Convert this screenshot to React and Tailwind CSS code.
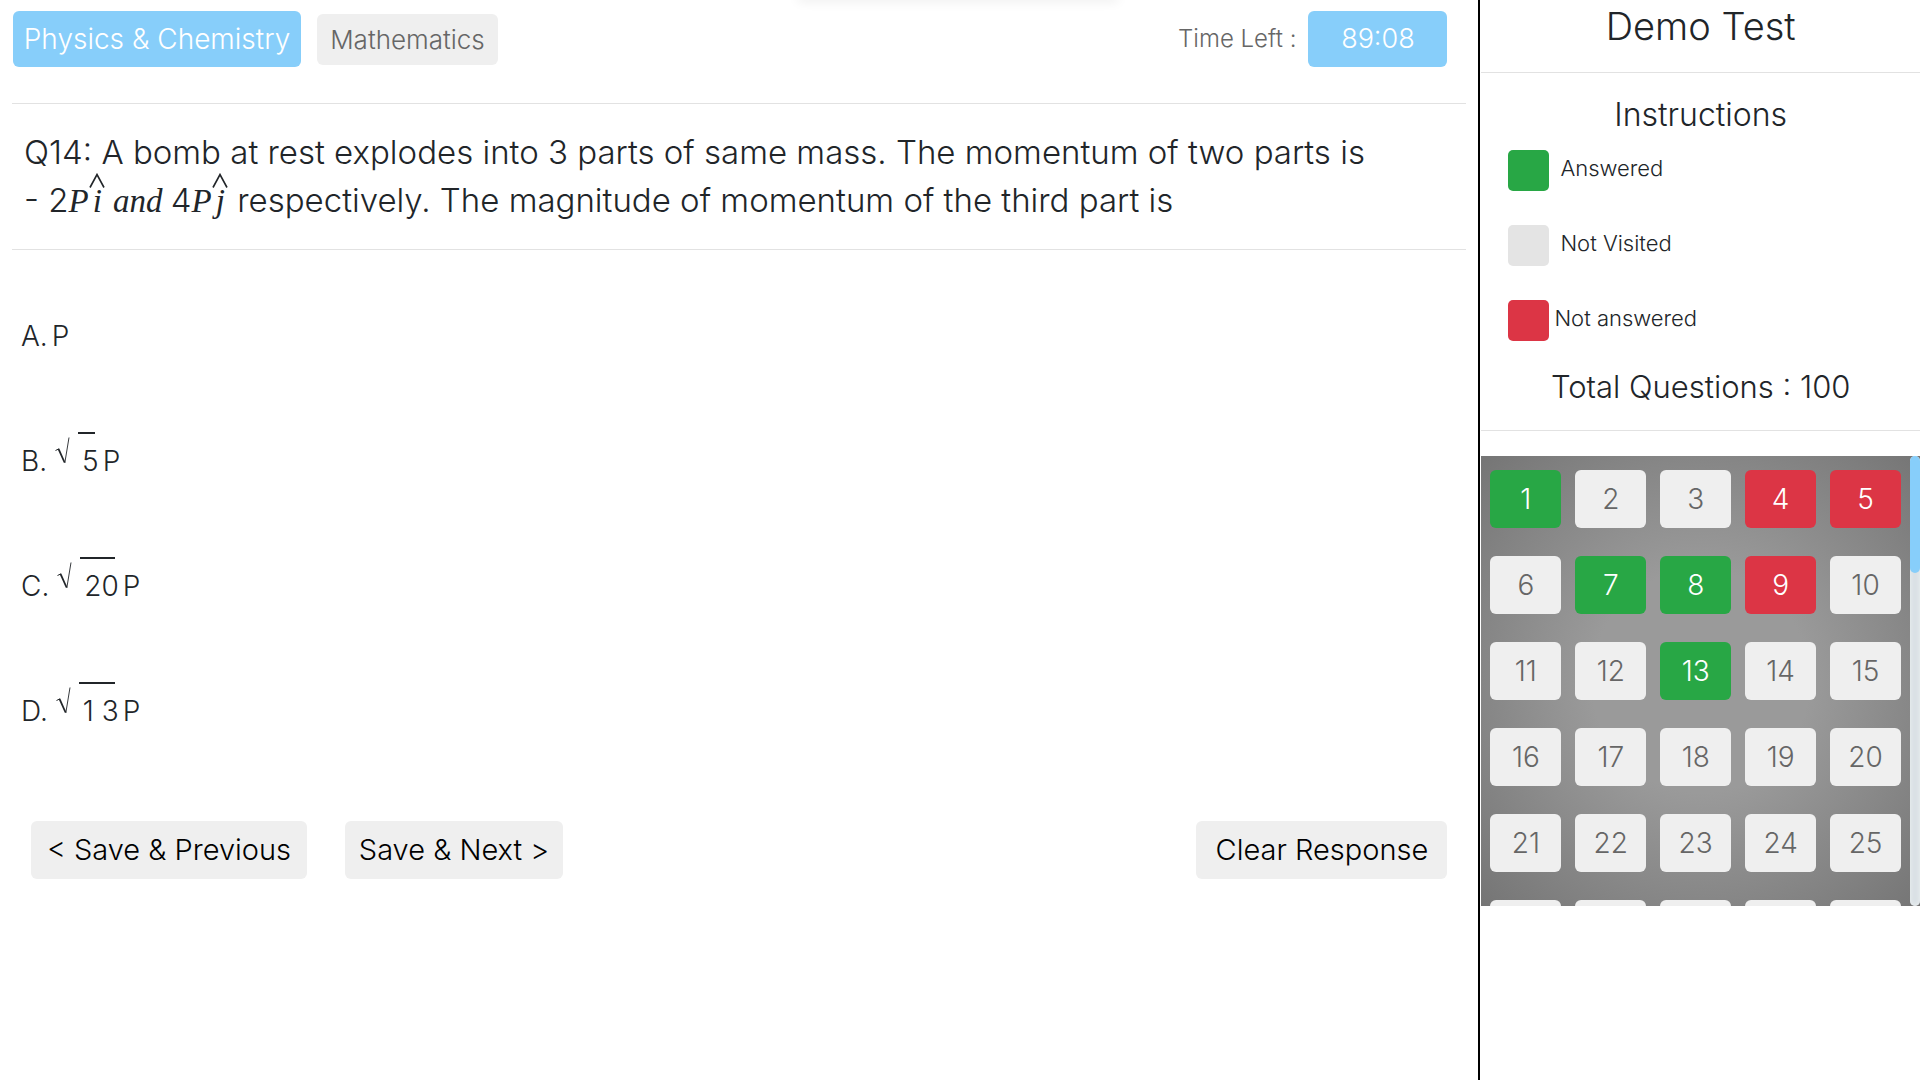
import React from "react";

const ANSWERED = [1, 7, 8, 13];
const NOT_ANSWERED = [4, 5, 9];
const QUESTIONS = Array.from({ length: 30 }, (_, i) => i + 1);

const OPTIONS = [
  { letter: "A", root: null },
  { letter: "B", root: "5" },
  { letter: "C", root: "20" },
  { letter: "D", root: "1 3" },
];

function tileColor(n) {
  if (ANSWERED.includes(n)) return "bg-[#28a745] text-white";
  if (NOT_ANSWERED.includes(n)) return "bg-[#dc3545] text-white";
  return "bg-[#efefef] text-[#666]";
}

function Hat({ children }) {
  return (
    <span className="relative ml-1 mr-[3px] inline-block">
      {children}
      <svg
        className="absolute left-1/2 -top-1 -translate-x-1/2"
        width="16"
        height="15"
        viewBox="0 0 16 15"
        fill="none"
        stroke="#212529"
        strokeWidth="1.6"
        aria-hidden="true"
      >
        <path d="M1 14.5 8 1.5l7 13" />
      </svg>
    </span>
  );
}

function Root({ children }) {
  return (
    <>
      <svg className="mb-5 ml-2" width="15" height="27" viewBox="0 0 15 27" fill="none" stroke="#212529" aria-hidden="true">
        <path d="M0.5 13.5 4 11.8" strokeWidth="1" />
        <path d="M3.5 11.8 9.6 25.5" strokeWidth="1.8" />
        <path d="M9.8 26 14 0.5" strokeWidth="0.9" />
      </svg>
      <span className="relative ml-3">
        {children}
        <span className="absolute -left-1 right-1 -top-2 h-0.5 bg-[#212529]" />
      </span>
    </>
  );
}

function Legend({ color, gap, children }) {
  return (
    <li className={"flex h-[41px] " + gap}>
      <span className={"size-[41px] shrink-0 rounded-[5px] " + color} />
      <span className="text-[22px] leading-9">{children}</span>
    </li>
  );
}

export default function App() {
  return (
    <div className="flex min-h-screen bg-white font-[Inter,sans-serif] font-light text-[#212529]">
      <main className="relative min-w-0 flex-1 px-3">
        <div className="absolute left-[54%] -top-1 h-1 w-[320px] shadow-[0_0_12px_rgba(0,0,0,0.14)]" />
        <header className="flex h-[103px] items-start justify-between pl-px pr-[19px] pt-[11px]">
          <nav className="flex items-center gap-4">
            <button className="h-14 w-[288px] whitespace-nowrap rounded-md bg-[#87cefa] text-[28px] text-white">
              Physics &amp; Chemistry
            </button>
            <button className="h-[51px] w-[181px] whitespace-nowrap rounded-md bg-[#efefef] text-[26px] text-[#666]">
              Mathematics
            </button>
          </nav>
          <div className="flex items-center gap-3">
            <span className="text-[24px] text-[#666]">Time Left :</span>
            <span className="flex h-14 w-[139px] items-center justify-center rounded-md bg-[#87cefa] text-[27px] text-white">
              89:08
            </span>
          </div>
        </header>

        <section className="border-y border-[#e2e2e2] pb-6 pl-3 pt-6">
          <h1 className="text-[33px] leading-[48px]">
            Q14: A bomb at rest explodes into 3 parts of same mass. The momentum of two parts is
            <br />- 2
            <span className="font-['Liberation_Serif',serif] font-normal italic">
              P<Hat>i</Hat> and{" "}
            </span>
            4
            <span className="font-['Liberation_Serif',serif] font-normal italic">
              P<Hat>j</Hat>
            </span>{" "}
            respectively. The magnitude of momentum of the third part is
          </h1>
        </section>

        <fieldset className="mt-[23px]">
          {OPTIONS.map((o) => (
            <label key={o.letter} className="flex h-[125px] items-center pl-[9px] text-[28px]">
              <input type="radio" name="answer" value={o.letter} className="sr-only" />
              <span>{o.letter}.</span>
              {o.root && <Root>{o.root}</Root>}
              <span className="ml-1">P</span>
            </label>
          ))}
        </fieldset>

        <div className="mt-12 flex pl-[19px] pr-[19px] text-[29px] text-black">
          <button className="h-[58px] w-[276px] whitespace-nowrap rounded-md bg-[#efefef]">&lt; Save &amp; Previous</button>
          <button className="ml-[38px] h-[58px] w-[218px] whitespace-nowrap rounded-md bg-[#efefef]">
            Save &amp; Next &gt;
          </button>
          <button className="ml-auto h-[58px] w-[251px] whitespace-nowrap rounded-md bg-[#efefef]">Clear Response</button>
        </div>
      </main>

      <aside className="w-[23%] shrink-0 border-l-2 border-black pl-px">
        <h2 className="h-[73px] border-b border-[#e2e2e2] text-center text-[38px] leading-[52px]">Demo Test</h2>
        <div className="h-[358px] border-b border-[#e2e2e2] pt-[18px]">
          <h3 className="text-center text-[32px] leading-[48px]">Instructions</h3>
          <ul className="mt-[11px] flex flex-col gap-[34px] pl-[27px]">
            <Legend color="bg-[#28a745]" gap="gap-[11px]">Answered</Legend>
            <Legend color="bg-[#e4e4e4]" gap="gap-[11px]">Not Visited</Legend>
            <Legend color="bg-[#dc3545]" gap="gap-[5px]">Not answered</Legend>
          </ul>
          <p className="mt-[22px] text-center text-[31px] leading-[48px]">Total Questions : 100</p>
        </div>
        <div className="mt-[25px] flex h-[450px] bg-[radial-gradient(ellipse_at_center,#9a9a9a_35%,#757575_100%)]">
          <div className="grid flex-1 auto-rows-[58px] grid-cols-5 gap-x-[14px] gap-y-7 overflow-y-auto px-[9px] pt-[14px] text-[28px] [scrollbar-width:none]">
            {QUESTIONS.map((n) => (
              <button key={n} className={"rounded-md " + tileColor(n)}>
                {n}
              </button>
            ))}
          </div>
          <div className="w-[10px] rounded-full bg-[#d9e0e4] shadow-[inset_0_0_5px_#eef2f4]">
            <div className="h-[117px] rounded-full bg-[#87cefa]" />
          </div>
        </div>
      </aside>
    </div>
  );
}
